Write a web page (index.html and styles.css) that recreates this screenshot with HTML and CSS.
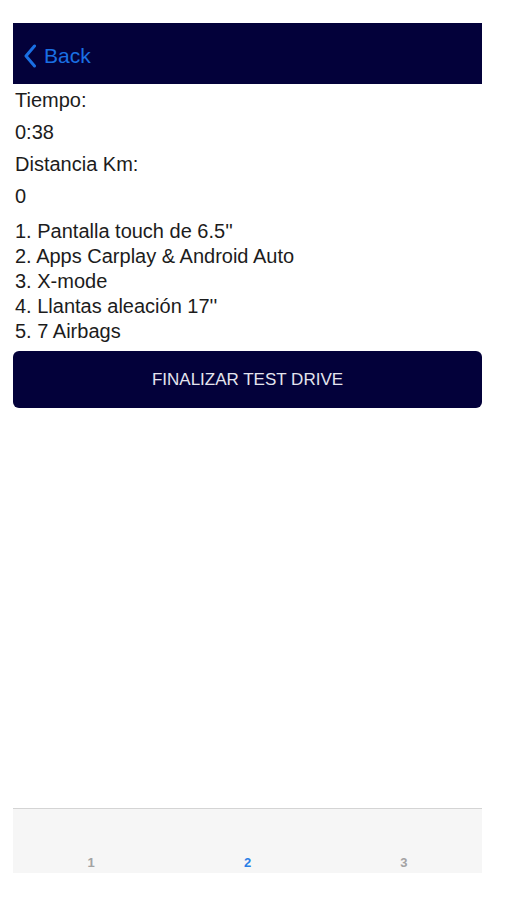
FILE: index.html
```html
<!doctype html>
<html lang="es">
	<head>
		<title>Test Drive</title>
		<meta charset="utf-8">
		<meta name="viewport" content="width=device-width, user-scalable=no, minimum-scale=1.0, maximum-scale=1.0">
		<link rel="stylesheet" href="styles.css">
	</head>

	<body>
		<div class="screen">
			<div class="navbar">
				<a class="back" href="#">
					<svg class="chevron" width="14" height="24" viewBox="0 0 14 24">
						<path d="M11.5 2 L3 12 L11.5 22" fill="none" stroke="#1a6fe3" stroke-width="3" stroke-linecap="round" stroke-linejoin="round"/>
					</svg>
					Back
				</a>
			</div>

			<div class="info">
				<div class="row">Tiempo:</div>
				<div class="row">0:38</div>
				<div class="row">Distancia Km:</div>
				<div class="row">0</div>
			</div>

			<div class="features">
				1. Pantalla touch de 6.5''<br />
				2. Apps Carplay &amp; Android Auto<br />
				3. X-mode<br />
				4. Llantas aleación 17''<br />
				5. 7 Airbags
			</div>

			<button class="finish">FINALIZAR TEST DRIVE</button>

			<div class="spacer"></div>

			<div class="tabbar">
				<div class="tab">1</div>
				<div class="tab active">2</div>
				<div class="tab">3</div>
			</div>
		</div>
	</body>
</html>
```

FILE: styles.css
```css
html, body {
	margin:0;
	padding:0;
	background:#ffffff;
	font-family:"Liberation Sans", Arial, Helvetica, sans-serif;
	color:#1c1c1c;
}

.screen {
	display:flex;
	flex-direction:column;
	width:469px;
	height:850px;
	margin:23px 0 0 13px;
}

.navbar {
	display:flex;
	align-items:center;
	box-sizing:border-box;
	height:61px;
	background:#03013a;
	padding:5px 0 0 10px;
}

.back {
	display:flex;
	align-items:center;
	gap:7px;
	color:#1a6fe3;
	font-size:21px;
	text-decoration:none;
}

.chevron {
	display:block;
}

.info {
	padding-left:2px;
}

.row {
	font-size:20px;
	line-height:32px;
}

.features {
	margin-top:7px;
	padding-left:2px;
	font-size:20px;
	line-height:25px;
}

.finish {
	margin-top:7px;
	height:57px;
	border:none;
	border-radius:6px;
	background:#03013a;
	color:#e4e4ee;
	font-family:"Liberation Sans", Arial, sans-serif;
	font-size:17px;
	cursor:pointer;
}

.spacer {
	flex:1;
}

.tabbar {
	display:flex;
	height:64px;
	background:#f6f6f6;
	border-top:1px solid #d4d4d4;
}

.tab {
	flex:1;
	display:flex;
	align-items:flex-end;
	justify-content:center;
	padding-bottom:3px;
	font-size:13px;
	font-weight:bold;
	color:#a3a3a3;
}

.tab.active {
	color:#2a7fe6;
}
```
